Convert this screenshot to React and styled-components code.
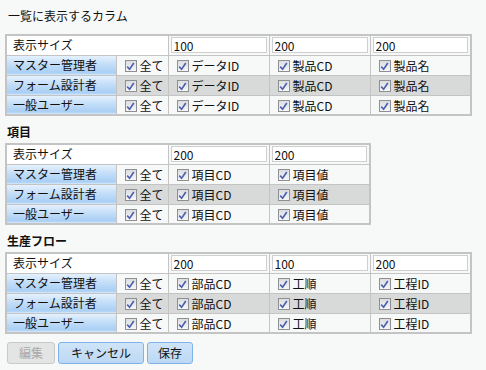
import React from 'react'
import styled, { createGlobalStyle } from 'styled-components'

const GlobalStyle = createGlobalStyle`
  html, body {
    margin: 0;
    padding: 0;
    background: #f7f9f9;
  }
  body {
    font-family: "Noto Sans CJK JP", "Noto Sans", sans-serif;
    font-size: 12px;
    color: #111;
  }
`;

const Page = styled.div`
  padding: 8px 5px 0 5px;
  width: 476px;
`;

const Title = styled.div`
  margin: 0 0 10px 3px;
  line-height: 16px;
  height: 16px;
`;

const Heading = styled.div`
  margin: 8px 0 3px 2px;
  line-height: 16px;
  height: 16px;
  font-weight: 700;
`;

const Table = styled.table`
  border-collapse: collapse;
  table-layout: fixed;
  border: 2px solid #c4c4c4;
  width: ${p => p.$width}px;
`;

const Row = styled.tr`
  background: ${p => (p.$shaded ? '#d8dada' : 'transparent')};
`;

const Cell = styled.td`
  box-sizing: border-box;
  border: 1px solid #c4c4c4;
  padding: 0;
  height: 20px;
  line-height: 16px;
  white-space: nowrap;
  overflow: hidden;
  vertical-align: middle;
`;

const SizeLabel = styled(Cell)`
  background: #ffffff;
  padding-left: 6px;
`;

const RoleLabel = styled(Cell)`
  background: linear-gradient(to bottom, #e7f2fd 0%, #c4def8 45%, #a9cff4 90%, #bcdaf7 100%);
  padding-left: 6px;
`;

const CheckCell = styled(Cell)`
  padding-left: 8px;
  padding-top: 2px;
`;

const InputCell = styled(Cell)`
  padding: 0 2px;
`;

const SizeInput = styled.input`
  box-sizing: border-box;
  display: block;
  width: 100%;
  height: 16px;
  border: 1px solid #cfcfcf;
  background: #fff;
  font: inherit;
  font-size: 12px;
  line-height: 14px;
  padding: 0 2px;
  color: #111;
  outline: none;
`;

const CheckLabel = styled.label`
  display: inline-flex;
  align-items: center;
  gap: 3px;
  height: 16px;
`;

const Box = styled.span`
  box-sizing: border-box;
  display: inline-flex;
  align-items: center;
  justify-content: center;
  width: 12px;
  height: 12px;
  border: 1px solid #8d8f93;
  background: linear-gradient(to bottom, #dcdde0, #f6f6f7);
`;

const ButtonBar = styled.div`
  display: flex;
  gap: 3px;
  margin: 8px 0 0 2px;
`;

const Button = styled.button`
  height: 22px;
  padding: 0 ${p => p.$pad}px;
  font: inherit;
  font-size: 12px;
  line-height: 16px;
  border-radius: 3px;
  border: 1px solid ${p => (p.disabled ? '#c9c9c9' : '#7db3e8')};
  background: ${p => (p.disabled ? '#e3e4e4' : 'linear-gradient(to bottom, #cfe4f8, #bcd8f4)')};
  color: ${p => (p.disabled ? '#a9a9a9' : '#111')};
`;

function Check({ text }) {
  return (
    <CheckLabel>
      <Box>
        <svg width="9" height="9" viewBox="0 0 9 9">
          <path d="M1.2 4.6 L3.6 7.2 L7.8 1" fill="none" stroke="#4a5fb0" strokeWidth="1.6" />
        </svg>
      </Box>
      {text}
    </CheckLabel>
  )
}

const roles = ['マスター管理者', 'フォーム設計者', '一般ユーザー'];

function ColumnTable({ columns }) {
  const width = 110 + 52 + columns.length * 101;
  return (
    <Table $width={width}>
      <colgroup>
        <col style={{ width: 110 }} />
        <col style={{ width: 52 }} />
        {columns.map((c) => (
          <col key={c.name} style={{ width: 101 }} />
        ))}
      </colgroup>
      <tbody>
        <Row>
          <SizeLabel colSpan={2}>表示サイズ</SizeLabel>
          {columns.map((c) => (
            <InputCell key={c.name}>
              <SizeInput defaultValue={c.size} />
            </InputCell>
          ))}
        </Row>
        {roles.map((role, i) => (
          <Row key={role} $shaded={i === 1}>
            <RoleLabel>{role}</RoleLabel>
            <CheckCell><Check text="全て" /></CheckCell>
            {columns.map((c) => (
              <CheckCell key={c.name}><Check text={c.name} /></CheckCell>
            ))}
          </Row>
        ))}
      </tbody>
    </Table>
  )
}

export default function App() {
  return (
    <>
      <GlobalStyle />
      <Page>
        <Title>一覧に表示するカラム</Title>
        <ColumnTable
          columns={[
            { name: 'データID', size: '100' },
            { name: '製品CD', size: '200' },
            { name: '製品名', size: '200' },
          ]}
        />
        <Heading>項目</Heading>
        <ColumnTable
          columns={[
            { name: '項目CD', size: '200' },
            { name: '項目値', size: '200' },
          ]}
        />
        <Heading>生産フロー</Heading>
        <ColumnTable
          columns={[
            { name: '部品CD', size: '200' },
            { name: '工順', size: '100' },
            { name: '工程ID', size: '200' },
          ]}
        />
        <ButtonBar>
          <Button disabled $pad={11}>編集</Button>
          <Button $pad={12}>キャンセル</Button>
          <Button $pad={10}>保存</Button>
        </ButtonBar>
      </Page>
    </>
  )
}
